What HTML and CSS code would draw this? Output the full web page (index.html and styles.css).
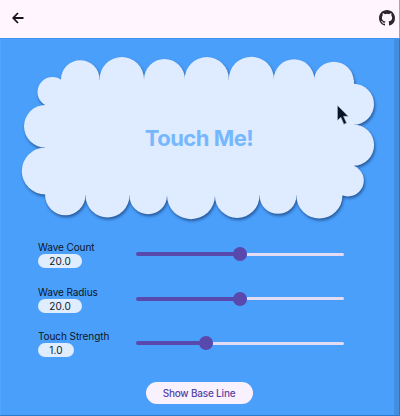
FILE: index.html
```html
<!DOCTYPE html>
<html lang="en">
<head>
<meta charset="utf-8">
<title>Touch Me!</title>
<link rel="stylesheet" href="styles.css">
</head>
<body>
<header class="bar">
  <svg class="back" viewBox="0 0 12 12"><path d="M6 1 1.2 6 6 11M1.2 6H11.5"/></svg>
  <svg class="github" viewBox="0 0 16 16"><path d="M8 0C3.58 0 0 3.58 0 8c0 3.54 2.29 6.53 5.47 7.59.4.07.55-.17.55-.38 0-.19-.01-.82-.01-1.49-2.01.37-2.53-.49-2.69-.94-.09-.23-.48-.94-.82-1.13-.28-.15-.68-.52-.01-.53.63-.01 1.08.58 1.23.82.72 1.21 1.87.87 2.33.66.07-.52.28-.87.51-1.07-1.78-.2-3.64-.89-3.64-3.95 0-.87.31-1.59.82-2.15-.08-.2-.36-1.02.08-2.12 0 0 .67-.21 2.2.82a7.6 7.6 0 0 1 4 0c1.53-1.04 2.2-.82 2.2-.82.44 1.1.16 1.92.08 2.12.51.56.82 1.27.82 2.15 0 3.07-1.87 3.75-3.65 3.95.29.25.54.73.54 1.48 0 1.07-.01 1.93-.01 2.2 0 .21.15.46.55.38A8.01 8.01 0 0 0 16 8c0-4.42-3.58-8-8-8z"/></svg>
</header>
<main class="page">
  <section class="stage">
    <svg class="cloud" viewBox="0 38 400 192">
      <g>
        <path d="M45 80H354V195H45z"/>
        <circle cx="80.3" cy="79.5" r="19.3"/>
        <circle cx="121.8" cy="79.2" r="22.2"/>
        <circle cx="164.5" cy="79.5" r="20.5"/>
        <circle cx="206.8" cy="79" r="22"/>
        <circle cx="251.4" cy="79.3" r="22.6"/>
        <circle cx="294" cy="79.5" r="20.3"/>
        <circle cx="333.8" cy="81.7" r="20"/>
        <circle cx="353.5" cy="104.2" r="20.5"/>
        <circle cx="353.4" cy="145.1" r="20.7"/>
        <circle cx="348" cy="180.6" r="15.8"/>
        <circle cx="319.4" cy="195.6" r="23"/>
        <circle cx="278" cy="195.3" r="18.5"/>
        <circle cx="237.2" cy="195.6" r="22.3"/>
        <circle cx="191" cy="195.2" r="24"/>
        <circle cx="148.2" cy="195.5" r="18.8"/>
        <circle cx="107.5" cy="195.4" r="22"/>
        <circle cx="65.3" cy="195" r="20.2"/>
        <circle cx="45.3" cy="171" r="23.5"/>
        <circle cx="45.3" cy="126.3" r="21.3"/>
        <circle cx="52.5" cy="92" r="15"/>
      </g>
    </svg>
    <h1 class="title">Touch Me!</h1>
    <svg class="pointer" viewBox="0 0 12 20"><path d="M.5.5v14.8l3.4-3.1 3 7 2.6-1.1-3-6.8h4.7z"/></svg>
  </section>
  <section class="controls">
    <div class="row">
      <div class="label">Wave Count<span class="value">20.0</span></div>
      <div class="slider"><i class="fill" style="width:50%"></i><i class="thumb"></i><i class="rest"></i></div>
    </div>
    <div class="row">
      <div class="label">Wave Radius<span class="value">20.0</span></div>
      <div class="slider"><i class="fill" style="width:50%"></i><i class="thumb"></i><i class="rest"></i></div>
    </div>
    <div class="row">
      <div class="label">Touch Strength<span class="value">1.0</span></div>
      <div class="slider"><i class="fill" style="width:33.8%"></i><i class="thumb"></i><i class="rest"></i></div>
    </div>
  </section>
  <button class="base">Show Base Line</button>
</main>
</body>
</html>
```
FILE: styles.css
```css
* { box-sizing: border-box; }
body {
  margin: 0;
  height: 416px;
  overflow: hidden;
  display: flex;
  flex-direction: column;
  font-family: Inter, "Liberation Sans", sans-serif;
  color: #0d1626;
}
.bar {
  height: 38px;
  flex: none;
  display: flex;
  align-items: center;
  justify-content: space-between;
  padding: 0 4px 2px 12px;
  background: #fef5fe;
  border-right: 1px solid #a9a3ad;
}
.back { width: 12px; height: 12px; fill: none; stroke: #17131a; stroke-width: 1.8; }
.github { width: 16px; height: 16px; fill: #2b262e; }
.page {
  flex: 1;
  display: flex;
  flex-direction: column;
  align-items: center;
  background: linear-gradient(90deg, #4fa8ff 1px, transparent 1px, transparent 394px, #438fdf 394px, #438fdf 399px, #3374b8 399px), #4a9ffb;
  border-top: 1px solid #3f93ee;
  border-bottom: 1px solid #2b7bd0;
}
.stage {
  width: 400px;
  height: 192px;
  margin-top: -1px;
  flex: none;
  position: relative;
  display: flex;
  justify-content: center;
}
.cloud {
  position: absolute;
  inset: 0;
  width: 400px;
  height: 192px;
  fill: #dfebfe;
  filter: drop-shadow(1.5px 2px 1.8px rgba(20, 50, 100, .65));
}
.title {
  position: relative;
  margin: 86px 0 0;
  padding-right: 2px;
  font-size: 22px;
  line-height: 28px;
  font-weight: 700;
  letter-spacing: -.5px;
  color: #76b8fe;
}
.pointer {
  position: absolute;
  left: 337px;
  top: 67px;
  width: 12px;
  height: 20px;
  fill: #081426;
  stroke: #a9bdd6;
  stroke-width: .5;
}
.controls {
  width: 306px;
  display: flex;
  flex-direction: column;
  gap: 16px;
  margin: 11px 0 0 -18px;
}
.row { display: flex; height: 28.6px; align-items: flex-start; }
.label {
  width: 97.5px;
  display: flex;
  flex-direction: column;
  align-items: flex-start;
  font-size: 10px;
  line-height: 13px;
  letter-spacing: -.08px;
  white-space: nowrap;
}
.value {
  height: 14px;
  padding: 0 11.3px;
  border-radius: 7px;
  background: #dfedff;
  line-height: 14px;
  letter-spacing: .1px;
}
.slider { width: 208px; height: 14px; margin-top: 6px; display: flex; align-items: center; }
.fill { height: 4px; border-radius: 2px 0 0 2px; background: #5949ad; flex: none; }
.thumb { width: 14px; height: 14px; border-radius: 50%; background: #5949ad; flex: none; margin: 0 -7px; }
.rest { flex: 1; height: 3px; background: #e1dcf3; border-radius: 0 2px 2px 0; margin-left: 7px; }
.base {
  width: 107px;
  height: 22px;
  margin: 23px 0 0 -2px;
  flex: none;
  border: 0;
  border-radius: 11px;
  background: #faf1fe;
  color: #5545a5;
  font: 500 10px Inter, "Liberation Sans", sans-serif;
  letter-spacing: -.2px;
  padding: 0;
}
```
